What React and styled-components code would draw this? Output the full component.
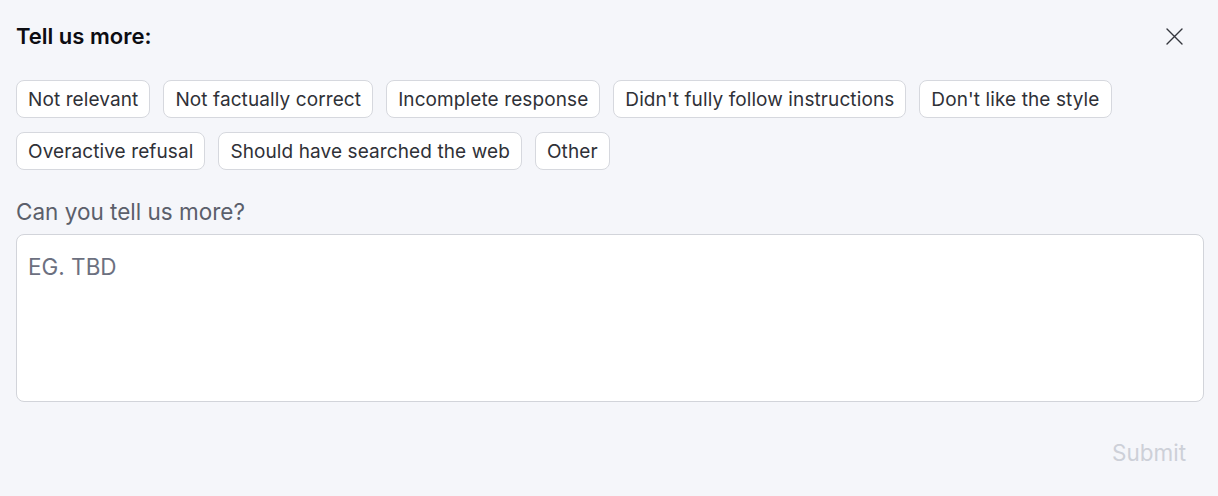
import React from 'react';
import styled, { createGlobalStyle } from 'styled-components';

const GlobalStyle = createGlobalStyle`
  html, body {
    margin: 0;
    padding: 0;
    background: #f5f6fa;
  }
  body {
    font-family: Inter, "Noto Sans", sans-serif;
  }
`;

const Panel = styled.div`
  box-sizing: border-box;
  width: 1218px;
  height: 496px;
  padding: 22px 14px 0 16px;
  background: #f5f6fa;
  display: flex;
  flex-direction: column;
`;

const Header = styled.div`
  display: flex;
  align-items: center;
  justify-content: space-between;
  height: 28px;
`;

const Title = styled.h2`
  margin: 0;
  font-size: 22px;
  line-height: 28px;
  font-weight: 600;
  color: #0d0d12;
`;

const CloseButton = styled.button`
  display: flex;
  align-items: center;
  justify-content: center;
  width: 28px;
  height: 28px;
  padding: 0;
  margin-right: 16px;
  border: none;
  background: transparent;
  color: #34363d;
  cursor: pointer;
`;

const Chips = styled.div`
  display: flex;
  flex-wrap: wrap;
  gap: 14px 13px;
  margin-top: 30px;
`;

const Chip = styled.button`
  box-sizing: border-box;
  height: 38px;
  padding: 0 11px;
  border: 1px solid #d6d8de;
  border-radius: 8px;
  background: #ffffff;
  font-family: inherit;
  font-size: 19px;
  letter-spacing: 0.1px;
  color: #2f3137;
  cursor: pointer;
`;

const Label = styled.label`
  margin-top: 30px;
  font-size: 22.5px;
  line-height: 24px;
  color: #5b5f6b;
`;

const TextArea = styled.textarea`
  box-sizing: border-box;
  width: 1188px;
  height: 168px;
  margin-top: 10px;
  padding: 18px 11px;
  border: 1px solid #d2d4da;
  border-radius: 8px;
  background: #ffffff;
  font-family: inherit;
  font-size: 22.5px;
  resize: none;
  outline: none;
  &::placeholder {
    color: #6c7080;
  }
`;

const Footer = styled.div`
  display: flex;
  justify-content: flex-end;
  margin-top: 37px;
  padding-right: 18px;
`;

const SubmitButton = styled.button`
  padding: 0;
  border: none;
  background: transparent;
  font-family: inherit;
  font-size: 22.5px;
  color: #cdd0d8;
  cursor: default;
`;

const reasons = [
  'Not relevant',
  'Not factually correct',
  'Incomplete response',
  "Didn't fully follow instructions",
  "Don't like the style",
  'Overactive refusal',
  'Should have searched the web',
  'Other',
];

function App() {
  return (
    <>
      <GlobalStyle />
      <Panel>
        <Header>
          <Title>Tell us more:</Title>
          <CloseButton aria-label="Close">
            <svg width="17" height="17" viewBox="0 0 17 17" fill="none" stroke="currentColor" strokeWidth="1.4" strokeLinecap="round">
              <path d="M1 1l15 15M16 1L1 16" />
            </svg>
          </CloseButton>
        </Header>
        <Chips>
          {reasons.map((r) => (
            <Chip key={r}>{r}</Chip>
          ))}
        </Chips>
        <Label>Can you tell us more?</Label>
        <TextArea placeholder="EG. TBD" />
        <Footer>
          <SubmitButton disabled>Submit</SubmitButton>
        </Footer>
      </Panel>
    </>
  );
}

export default App;
